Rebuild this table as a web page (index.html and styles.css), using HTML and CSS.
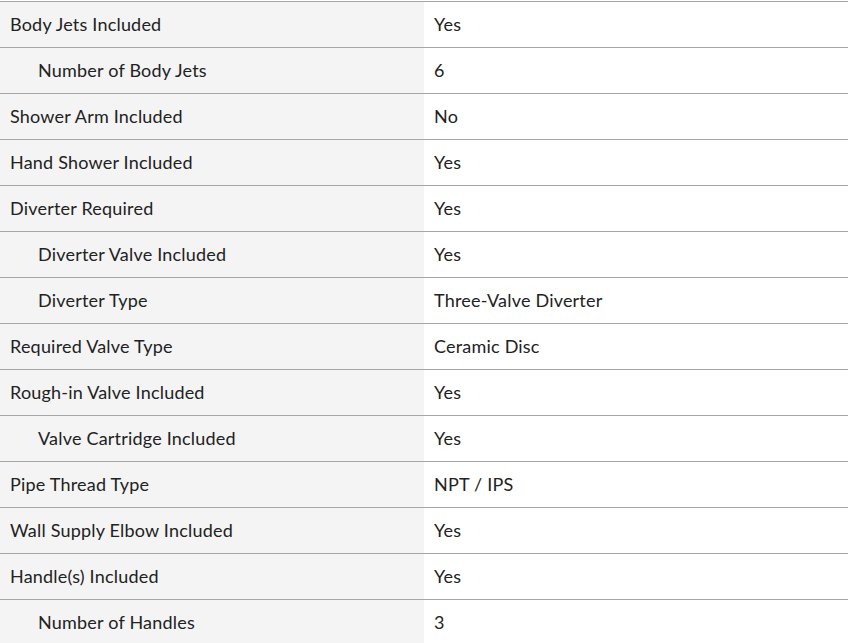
FILE: index.html
```html
<!DOCTYPE html>
<html>
<head>
<meta charset="utf-8">
<link rel="stylesheet" href="styles.css">
</head>
<body>
<table class="specs">
  <tr><td class="label">Body Jets Included</td><td class="value">Yes</td></tr>
  <tr><td class="label sub">Number of Body Jets</td><td class="value">6</td></tr>
  <tr><td class="label">Shower Arm Included</td><td class="value">No</td></tr>
  <tr><td class="label">Hand Shower Included</td><td class="value">Yes</td></tr>
  <tr><td class="label">Diverter Required</td><td class="value">Yes</td></tr>
  <tr><td class="label sub">Diverter Valve Included</td><td class="value">Yes</td></tr>
  <tr><td class="label sub">Diverter Type</td><td class="value">Three-Valve Diverter</td></tr>
  <tr><td class="label">Required Valve Type</td><td class="value">Ceramic Disc</td></tr>
  <tr><td class="label">Rough-in Valve Included</td><td class="value">Yes</td></tr>
  <tr><td class="label sub">Valve Cartridge Included</td><td class="value">Yes</td></tr>
  <tr><td class="label">Pipe Thread Type</td><td class="value">NPT / IPS</td></tr>
  <tr><td class="label">Wall Supply Elbow Included</td><td class="value">Yes</td></tr>
  <tr><td class="label">Handle(s) Included</td><td class="value">Yes</td></tr>
  <tr><td class="label sub">Number of Handles</td><td class="value">3</td></tr>
</table>
</body>
</html>
```
FILE: styles.css
```css
html, body {
  margin: 0;
  padding: 0;
  background: #ffffff;
}
body {
  padding-top: 1px;
  font-family: "Lato", "Liberation Sans", sans-serif;
  font-size: 18px;
  letter-spacing: 0.2px;
  color: #222222;
}
.specs {
  width: 848px;
  border-collapse: collapse;
  table-layout: fixed;
}
.specs tr {
  height: 46px;
}
.specs td {
  border-top: 1px solid #a6a6a6;
  padding: 0 10px 2px;
  vertical-align: middle;
  white-space: nowrap;
}
.label {
  width: 404px;
  background: #f4f4f4;
}
.label.sub {
  padding-left: 38px;
}
.value {
  background: #ffffff;
  padding-left: 8px;
}
```
